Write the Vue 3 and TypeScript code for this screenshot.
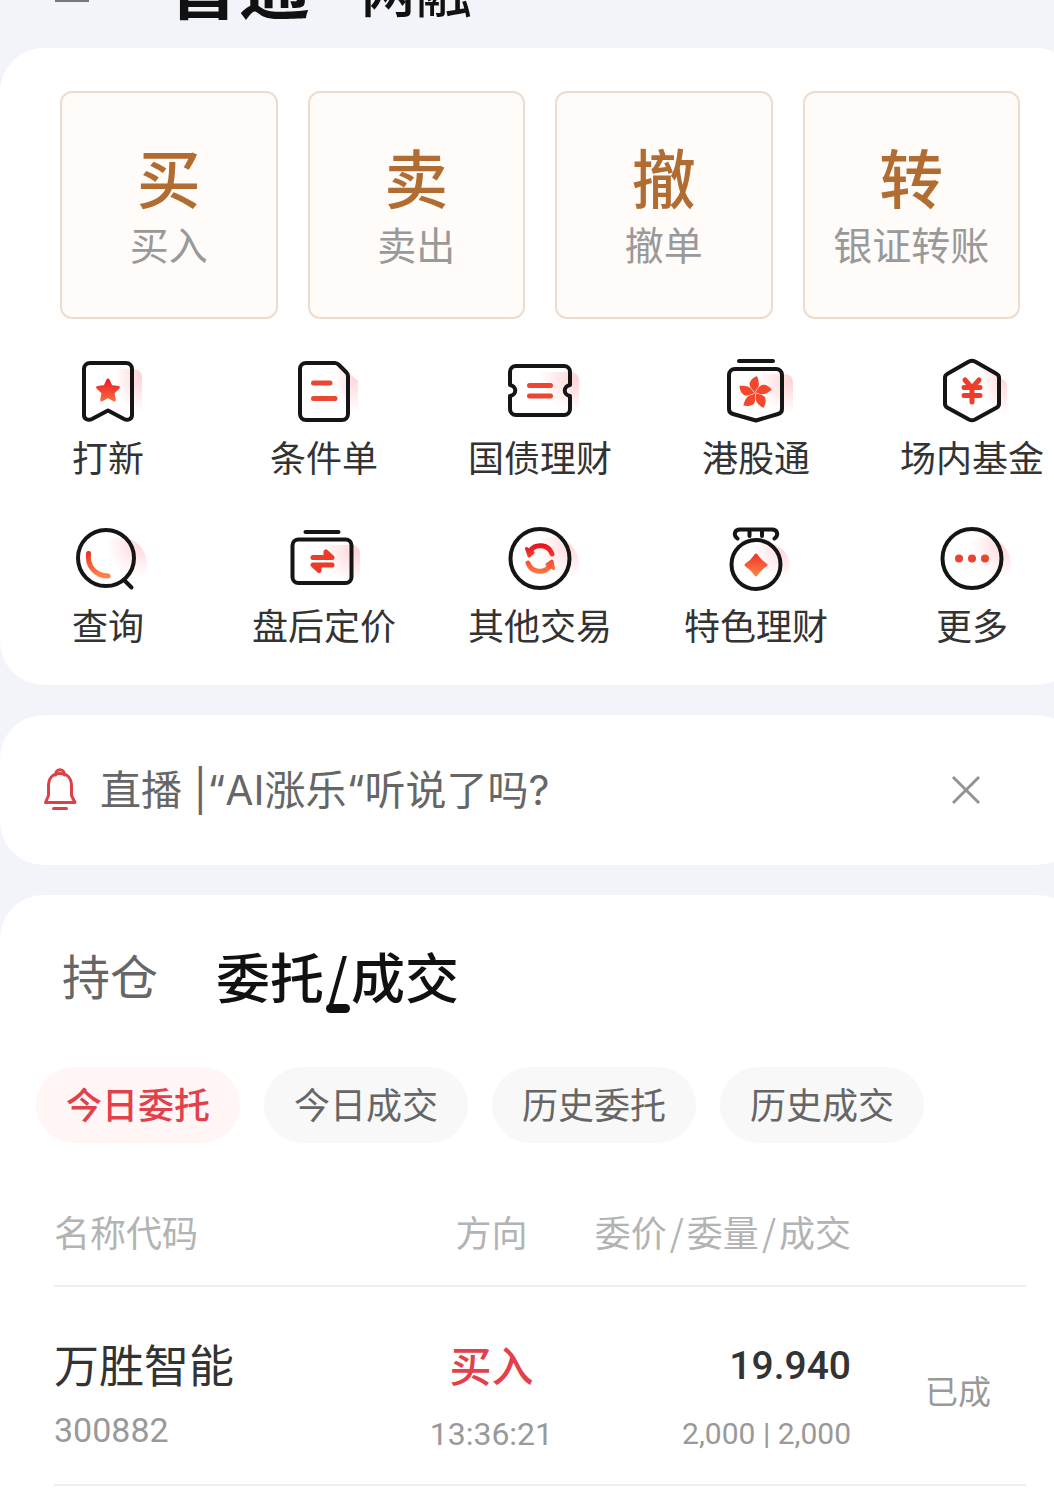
<script setup lang="ts">
import { ref } from 'vue'

interface TradeAction { mark: string; label: string }
interface Shortcut { icon: string; label: string }
interface Order {
  name: string
  code: string
  side: string
  time: string
  price: string
  volume: string
  status: string
}

const actions: TradeAction[] = [
  { mark: '买', label: '买入' },
  { mark: '卖', label: '卖出' },
  { mark: '撤', label: '撤单' },
  { mark: '转', label: '银证转账' },
]

const shortcuts: Shortcut[] = [
  { icon: 'bookmark', label: '打新' },
  { icon: 'note', label: '条件单' },
  { icon: 'ticket', label: '国债理财' },
  { icon: 'shield', label: '港股通' },
  { icon: 'fund', label: '场内基金' },
  { icon: 'search', label: '查询' },
  { icon: 'swap', label: '盘后定价' },
  { icon: 'cycle', label: '其他交易' },
  { icon: 'medal', label: '特色理财' },
  { icon: 'more', label: '更多' },
]

const filters: string[] = ['今日委托', '今日成交', '历史委托', '历史成交']
const activeFilter = ref(0)
const noticeOpen = ref(true)

const orders: Order[] = [
  {
    name: '万胜智能',
    code: '300882',
    side: '买入',
    time: '13:36:21',
    price: '19.940',
    volume: '2,000 | 2,000',
    status: '已成',
  },
]

const petals: number[] = [0, 72, 144, 216, 288]
</script>

<template>
  <div class="page">
    <svg class="defs" width="0" height="0" aria-hidden="true">
      <defs>
        <radialGradient id="glow" cx="0.95" cy="0.15" r="0.8">
          <stop offset="0" stop-color="#ff8f97" stop-opacity="0.4" />
          <stop offset="1" stop-color="#ff8f97" stop-opacity="0" />
        </radialGradient>
        <radialGradient id="halo" cx="0.85" cy="0.15" r="0.6">
          <stop offset="0" stop-color="#ff8f97" stop-opacity="0.35" />
          <stop offset="1" stop-color="#ff8f97" stop-opacity="0" />
        </radialGradient>
        <linearGradient id="fire" gradientUnits="userSpaceOnUse" x1="0" y1="22" x2="0" y2="52">
          <stop offset="0" stop-color="#ea1420" />
          <stop offset="1" stop-color="#fd8046" />
        </linearGradient>
      </defs>
    </svg>

    <div class="canvas">
      <header class="top">
        <button class="menu" type="button" aria-label="菜单">
          <svg width="36" height="30" viewBox="0 0 36 30">
            <path d="M1 2H35M1 15H35M1 28H35" fill="none" stroke="#77787b" stroke-width="4" />
          </svg>
        </button>
        <a class="account main" href="#">普通</a>
        <a class="account" href="#">两融</a>
      </header>

      <section class="card trade">
        <div class="actions">
          <button v-for="a in actions" :key="a.mark" class="action" type="button">
            <span class="mark">{{ a.mark }}</span>
            <span class="hint">{{ a.label }}</span>
          </button>
        </div>

        <nav class="shortcuts">
          <a v-for="s in shortcuts" :key="s.icon" class="shortcut" href="#">
            <svg class="icon" width="80" height="72" viewBox="0 0 80 72" aria-hidden="true">
              <template v-if="s.icon === 'bookmark'">
                <rect x="42" y="14" width="32" height="46" rx="8" fill="url(#glow)" />
                <path class="ink" d="M22 8H58a6 6 0 0 1 6 6V60c0 4-4 6-8 4L40 55.5 24 64c-4 2-8 0-8-4V14a6 6 0 0 1 6-6z" />
                <path d="M40 25l3 6.500 7.400 1-5.400 5.200 1.300 7.300L40 41.500l-6.300 3.500 1.300-7.300-5.400-5.200 7.400-1z" fill="url(#fire)" stroke="url(#fire)" stroke-width="3" stroke-linejoin="round" />
              </template>
              <template v-else-if="s.icon === 'note'">
                <path d="M50 12H58L74 26V60H46z" fill="url(#glow)" />
                <path class="ink" d="M22 8H51q2 0 4 2L62 17q2 2 2 4V59a6 6 0 0 1-6 6H22a6 6 0 0 1-6-6V14a6 6 0 0 1 6-6z" />
                <path class="bar" d="M29.500 28H46M29.500 43.500H51" />
              </template>
              <template v-else-if="s.icon === 'ticket'">
                <rect x="32" y="17" width="47" height="42" rx="8" fill="url(#glow)" />
                <path class="ink" d="M16 11H64a6 6 0 0 1 6 6V30c-7 1-7 10 0 11V54a6 6 0 0 1-6 6H16a6 6 0 0 1-6-6V41c7-1 7-10 0-11V17a6 6 0 0 1 6-6z" />
                <path class="bar" d="M29.500 30.500H50.500M29.500 41H50.500" />
              </template>
              <template v-else-if="s.icon === 'shield'">
                <rect x="34" y="19" width="43" height="42" rx="8" fill="url(#glow)" />
                <path class="ink" d="M23 6H57" />
                <path class="ink" d="M19 14H60a6 6 0 0 1 6 6V54q0 4-4 5L40 65.500 17 59q-4-1-4-5V20a6 6 0 0 1 6-6z" />
                <g fill="#f4472d">
                  <path v-for="p in petals" :key="p" :transform="`rotate(${p} 39 38)`" d="M39 38C37 35 32 31 34 27C36 23 39 22 41 21C43 26 44 31 41 34Q39 36 39 38z" />
                </g>
              </template>
              <template v-else-if="s.icon === 'fund'">
                <path d="M44 14L58 16 72 25q3 2 3 5V62H44z" fill="url(#glow)" />
                <path class="ink" d="M37 6.500q3-1.500 6 0L64 18.500q3 1.500 3 4V49q0 2.500-3 4L43 64.500q-3 1.500-6 0L16 53q-3-1.500-3-4V22.500q0-2.500 3-4z" />
                <path d="M33 25L40 33 47 25M32 32.500H48M32 40.500H48M40 33V47" fill="none" stroke="#f03c2a" stroke-width="5" stroke-linecap="round" />
              </template>
              <template v-else-if="s.icon === 'search'">
                <circle cx="52" cy="41" r="27" fill="url(#halo)" />
                <circle class="ink" cx="38" cy="35" r="28" />
                <path class="ink" d="M56 57L63.500 64.500" />
                <path d="M20.500 30.500C19 43 27 53 40 53" fill="none" stroke="url(#fire)" stroke-width="5" stroke-linecap="round" />
              </template>
              <template v-else-if="s.icon === 'swap'">
                <rect x="30" y="22" width="46" height="40" rx="8" fill="url(#glow)" />
                <path class="ink" d="M21.500 9H54.500" />
                <rect class="ink" x="8.500" y="16.500" width="59" height="43.500" rx="6" />
                <path d="M29 34.500H48L42 29V34M48 42H29L35 47.500V42" fill="#ee3b27" stroke="#ee3b27" stroke-width="5" stroke-linecap="round" stroke-linejoin="round" />
              </template>
              <template v-else-if="s.icon === 'cycle'">
                <circle cx="52" cy="41" r="27" fill="url(#halo)" />
                <circle class="ink" cx="40" cy="35.500" r="29.500" />
                <path d="M30 28A12.500 12.500 0 0 1 52 31M28 40A12.500 12.500 0 0 0 50 43" fill="none" stroke="url(#fire)" stroke-width="5" stroke-linecap="round" />
                <path d="M26.500 25.500L33 29.500 29 33zM53.500 45.500L47 41.500 52 38z" fill="url(#fire)" stroke="url(#fire)" stroke-width="3" stroke-linejoin="round" />
              </template>
              <template v-else-if="s.icon === 'medal'">
                <circle cx="50" cy="44" r="24" fill="url(#halo)" />
                <path class="ink" d="M21.500 15.500C17 12 18.500 6.500 24 6.500H56C61.500 6.500 63 12 58.500 15.500M33.500 7V13M46 7V13" />
                <circle class="ink" cx="40" cy="41.500" r="24.500" />
                <path d="M40 32Q44 38 50 42 44 46 40 52 36 46 30 42 36 38 40 32z" fill="url(#fire)" stroke="url(#fire)" stroke-width="3" stroke-linejoin="round" />
              </template>
              <template v-else>
                <circle cx="52" cy="41" r="27" fill="url(#halo)" />
                <circle class="ink" cx="40" cy="35.500" r="29.500" />
                <g fill="#ea4330">
                  <circle cx="27" cy="35.500" r="4" />
                  <circle cx="40" cy="35.500" r="4" />
                  <circle cx="53" cy="35.500" r="4" />
                </g>
              </template>
            </svg>
            <span class="name">{{ s.label }}</span>
          </a>
        </nav>
      </section>

      <section v-if="noticeOpen" class="card notice">
        <svg width="40" height="48" viewBox="0 0 40 48" fill="none" stroke="#dd4049" stroke-width="3" stroke-linecap="round" stroke-linejoin="round" aria-hidden="true">
          <path d="M15.500 9C15.500 2 24.500 2 24.500 9" />
          <path d="M5.500 36.500L8.500 29.500V20C8.500 12 13 7.500 20 7.500S31.500 12 31.500 20V29.500L35 36.500z" />
          <path d="M13.500 42.500H26.500" />
        </svg>
        <p class="headline">直播 |“AI涨乐“听说了吗?</p>
        <button class="close" type="button" aria-label="关闭" @click="noticeOpen = false">
          <svg width="30" height="30" viewBox="0 0 30 30">
            <path d="M2 2L28 28M28 2L2 28" fill="none" stroke="#939393" stroke-width="3" />
          </svg>
        </button>
      </section>

      <section class="card book">
        <div class="tabs">
          <button class="tab" type="button">持仓</button>
          <button class="tab on" type="button">委托<span class="slash">/</span>成交</button>
        </div>
        <div class="filters">
          <button
            v-for="(f, i) in filters"
            :key="f"
            class="filter"
            :class="{ on: i === activeFilter }"
            type="button"
            @click="activeFilter = i"
          >{{ f }}</button>
        </div>
        <table class="orders">
          <thead>
            <tr>
              <th class="c-name" scope="col">名称代码</th>
              <th class="c-side" scope="col">方向</th>
              <th class="c-price" scope="col">委价<span class="slash">/</span>委量<span class="slash">/</span>成交</th>
              <td class="c-state"></td>
            </tr>
          </thead>
          <tbody>
            <tr v-for="o in orders" :key="o.code">
              <td class="c-name">
                <div class="stock">{{ o.name }}</div>
                <div class="code">{{ o.code }}</div>
              </td>
              <td class="c-side">
                <div class="side">{{ o.side }}</div>
                <div class="sub time">{{ o.time }}</div>
              </td>
              <td class="c-price">
                <div class="price">{{ o.price }}</div>
                <div class="sub">{{ o.volume }}</div>
              </td>
              <td class="c-state">{{ o.status }}</td>
            </tr>
          </tbody>
        </table>
      </section>
    </div>
  </div>
</template>

<style>
body {
  margin: 0;
  background: #f3f4f9;
}
</style>

<style scoped>
.page {
  overflow: hidden;
  background: #f3f4f9;
  color: #333;
  font-family: "Noto Sans CJK SC", sans-serif;
  font-weight: 400;
}
.defs {
  position: absolute;
}
.canvas {
  width: calc(100% + 26px);
}
button {
  margin: 0;
  padding: 0;
  border: 0;
  background: none;
  color: inherit;
  font: inherit;
  cursor: pointer;
}
a {
  color: inherit;
  text-decoration: none;
}
svg {
  display: block;
}

.top {
  display: flex;
  align-items: flex-end;
  height: 48px;
  padding-left: 54px;
  overflow: hidden;
  color: #111;
}
.menu {
  width: 36px;
  margin-right: 78px;
  padding-bottom: 46px;
}
.account {
  padding-bottom: 32px;
  font-size: 56px;
  line-height: 56px;
  font-weight: 500;
}
.account.main {
  margin-right: 50px;
  font-size: 71px;
  line-height: 68px;
  font-weight: 700;
}

.card {
  border-radius: 44px;
  background: #fff;
}
.card + .card {
  margin-top: 30px;
}

.trade {
  padding: 43px 0 39px;
}
.actions {
  display: grid;
  grid-template-columns: repeat(4, 1fr);
  gap: 30px;
  padding: 0 60px;
}
.action {
  display: flex;
  flex-direction: column;
  align-items: center;
  justify-content: center;
  gap: 2px;
  height: 228px;
  padding-bottom: 6px;
  border: 2px solid #ecdccf;
  border-radius: 12px;
  background: #fffbf8;
}
.mark {
  color: #b16d31;
  font-size: 64px;
  line-height: 80px;
  font-weight: 500;
}
.hint {
  color: #999;
  font-size: 39px;
  line-height: 52px;
}
.shortcuts {
  display: grid;
  grid-template-columns: repeat(5, 1fr);
  row-gap: 45px;
  margin-top: 36px;
}
.shortcut {
  display: flex;
  flex-direction: column;
  align-items: center;
  gap: 7px;
}
.name {
  font-size: 36px;
  line-height: 44px;
  white-space: nowrap;
}
.ink {
  fill: none;
  stroke: #151515;
  stroke-width: 4;
  stroke-linecap: round;
  stroke-linejoin: round;
}
.bar {
  fill: none;
  stroke: #ea4631;
  stroke-width: 5;
  stroke-linecap: round;
}

.notice {
  display: flex;
  align-items: center;
  gap: 20px;
  height: 150px;
  padding: 0 99px 0 40px;
}
.headline {
  flex: 1;
  margin: 0;
  color: #666;
  font-family: Inter, "Noto Sans CJK SC", sans-serif;
  font-size: 41px;
  line-height: 60px;
}

.book {
  padding: 41px 0 26px;
  border-radius: 44px 44px 0 0;
}
.tabs {
  display: flex;
  align-items: flex-start;
  gap: 58px;
  padding-left: 62px;
}
.tab {
  position: relative;
  color: #666;
  font-size: 48px;
  line-height: 76px;
}
.tab.on {
  color: #111;
  font-size: 54px;
  line-height: 80px;
  font-weight: 500;
}
.tab.on::after {
  position: absolute;
  bottom: 3px;
  left: calc(50% - 12px);
  width: 24px;
  height: 9px;
  border-radius: 5px;
  background: #111;
  content: "";
}
.slash {
  margin: 0 3px;
}
.filters {
  display: flex;
  gap: 24px;
  margin-top: 51px;
  padding-left: 36px;
}
.filter {
  padding: 0 30px 4px;
  border-radius: 38px;
  background: #f8f8f8;
  color: #666;
  font-size: 36px;
  line-height: 72px;
}
.filter.on {
  background: #fff6f5;
  color: #e2404a;
  font-weight: 500;
}

.orders {
  width: calc(100% - 108px);
  margin: 37px 54px 0;
  border-collapse: collapse;
  table-layout: fixed;
}
.orders th,
.orders td {
  padding: 0;
  border-bottom: 2px solid #eee;
  text-align: left;
  white-space: nowrap;
}
.orders th {
  height: 101px;
  padding-bottom: 4px;
  color: #b3b3b3;
  font-size: 36px;
  line-height: 48px;
  font-weight: 400;
}
.orders tbody td {
  height: 150px;
  padding-top: 47px;
  vertical-align: top;
}
.orders .c-name {
  width: 36%;
}
.orders .c-side {
  width: 18%;
  text-align: center;
}
.orders .c-price {
  width: 28%;
  text-align: right;
}
.orders tbody .c-state {
  padding: 8px 0 0 74px;
  color: #999;
  font-size: 33px;
  line-height: 48px;
  vertical-align: middle;
}
.stock,
.side {
  line-height: 60px;
}
.stock {
  font-size: 45px;
}
.side {
  color: #e2404a;
  font-size: 42px;
  font-weight: 500;
}
.price,
.code,
.sub {
  font-family: Roboto, "Noto Sans CJK SC", sans-serif;
}
.price {
  padding-top: 4px;
  font-size: 39px;
  line-height: 56px;
  font-weight: 500;
}
.code,
.sub {
  color: #999;
  line-height: 48px;
}
.code {
  margin-top: 12px;
  font-size: 34px;
}
.sub {
  margin-top: 16px;
  font-size: 30px;
}
.sub.time {
  font-size: 32px;
}
</style>
